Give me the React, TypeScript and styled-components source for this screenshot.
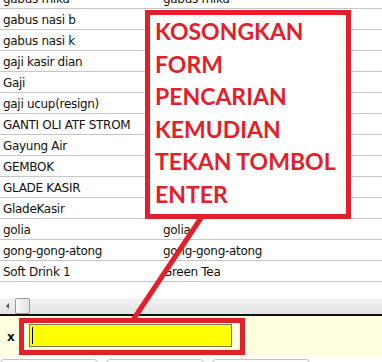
import React from 'react'
import styled, { createGlobalStyle } from 'styled-components'

const rows: [string, string][] = [
  ['gabus miku', 'gabus miku'],
  ['gabus nasi b', ''],
  ['gabus nasi k', ''],
  ['gaji kasir dian', ''],
  ['Gaji', ''],
  ['gaji ucup(resign)', ''],
  ['GANTI OLI ATF STROM', ''],
  ['Gayung Air', ''],
  ['GEMBOK', ''],
  ['GLADE KASIR', ''],
  ['GladeKasir', ''],
  ['golia', 'golia'],
  ['gong-gong-atong', 'gong-gong-atong'],
  ['Soft Drink 1', 'Green Tea'],
]

const calloutLines = ['KOSONGKAN', 'FORM', 'PENCARIAN', 'KEMUDIAN', 'TEKAN TOMBOL', 'ENTER']

const GlobalStyle = createGlobalStyle`
  html, body {
    margin: 0;
    padding: 0;
    background: #ffffff;
  }
  body {
    font-family: "DejaVu Sans", Verdana, sans-serif;
  }
`

const Page = styled.div`
  position: relative;
  width: 382px;
  height: 362px;
  overflow: hidden;
  display: flex;
  flex-direction: column;
  & > * {
    flex-shrink: 0;
  }
`

const GridArea = styled.div`
  height: 298px;
  overflow: hidden;
  background: #fff;
`

const RowList = styled.div`
  margin-top: -12px;
`

const Row = styled.div`
  display: grid;
  grid-template-columns: 160px 1fr;
  height: 20px;
  border-bottom: 1px solid #c6c6c6;
  align-items: center;
`

const Cell = styled.div`
  padding: 2px 0 0 3px;
  font-size: 12px;
  letter-spacing: -0.3px;
  color: #111;
  white-space: nowrap;
  overflow: hidden;
  line-height: 18px;
`

const ScrollBar = styled.div`
  height: 16px;
  display: flex;
  align-items: center;
  background: linear-gradient(#f2f2f2, #e4e4e4);
  border-bottom: 2px solid #111;
`

const ArrowLeft = styled.div`
  width: 0;
  height: 0;
  margin: 0 6px 0 6px;
  border-top: 3px solid transparent;
  border-bottom: 3px solid transparent;
  border-right: 3px solid #555;
`

const Thumb = styled.div`
  width: 13px;
  height: 14px;
  border: 1px solid #9a9a9a;
  border-radius: 2px;
  background: linear-gradient(90deg, #fdfdfd, #e2e2e2);
`

const SearchPanel = styled.div`
  height: 41px;
  background: #ffffe1;
  display: flex;
  align-items: center;
  padding-left: 7px;
`

const Label = styled.span`
  font-size: 12px;
  font-weight: bold;
  width: 12px;
  color: #111;
`

const HighlightFrame = styled.div`
  border: 5px solid #e3202a;
  padding: 1px 8px 3px 5px;
  display: flex;
`

const Field = styled.div`
  width: 199px;
  height: 21px;
  background: #ffff00;
  border: 1px solid #7c7c50;
  display: flex;
  align-items: center;
  padding-left: 2px;
`

const Caret = styled.span`
  width: 1px;
  height: 17px;
  background: #000;
`

const ButtonBar = styled.div`
  display: flex;
  gap: 8px;
  padding-top: 2px;
`

const Button = styled.div`
  width: 96px;
  height: 20px;
  border: 1px solid #c4c4c4;
  border-radius: 4px;
  background: linear-gradient(#ffffff, #f0f0f0);
`

const Callout = styled.div`
  position: absolute;
  left: 145px;
  top: 10px;
  width: 191px;
  height: 199px;
  border: 5px solid #e3202a;
  background: #fff;
  padding-left: 5px;
`

const CalloutLine = styled.div`
  font-family: Lato, "Open Sans", sans-serif;
  font-weight: 700;
  font-size: 23px;
  line-height: 32.5px;
  color: #e3202a;
  white-space: nowrap;
`

const Pointer = styled.svg`
  position: absolute;
  left: 0;
  top: 0;
  pointer-events: none;
`

export default function App() {
  return (
    <>
      <GlobalStyle />
      <Page>
        <GridArea>
          <RowList>
            {rows.map(([a, b], i) => (
              <Row key={i}>
                <Cell>{a}</Cell>
                <Cell>{b}</Cell>
              </Row>
            ))}
          </RowList>
        </GridArea>
        <ScrollBar>
          <ArrowLeft />
          <Thumb />
        </ScrollBar>
        <SearchPanel>
          <Label>x</Label>
          <HighlightFrame>
            <Field>
              <Caret />
            </Field>
          </HighlightFrame>
        </SearchPanel>
        <ButtonBar>
          <Button />
          <Button />
          <Button />
        </ButtonBar>

        <Pointer width="382" height="362" viewBox="0 0 382 362">
          <line x1="201" y1="218" x2="133" y2="320" stroke="#e3202a" strokeWidth="5" />
        </Pointer>
        <Callout>
          {calloutLines.map((t) => (
            <CalloutLine key={t}>{t}</CalloutLine>
          ))}
        </Callout>
      </Page>
    </>
  )
}
